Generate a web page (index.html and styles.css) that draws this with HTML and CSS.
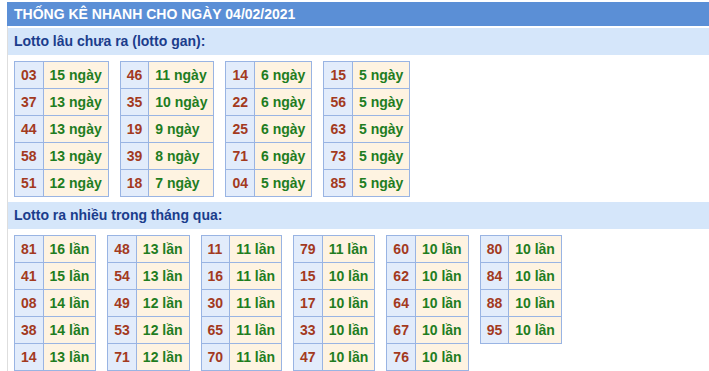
FILE: index.html
```html
<!DOCTYPE html>
<html lang="vi">
<head>
<meta charset="utf-8">
<title>Thống kê nhanh</title>
<link rel="stylesheet" href="styles.css">
</head>
<body>
<div class="box">
  <div class="head">THỐNG KÊ NHANH CHO NGÀY 04/02/2021</div>
  <div class="content">
    <div class="band">Lotto lâu chưa ra (lotto gan):</div>
    <div class="tables">
      <table class="lt">
        <tr><td class="n">03</td><td class="v">15 ngày</td></tr>
        <tr><td class="n">37</td><td class="v">13 ngày</td></tr>
        <tr><td class="n">44</td><td class="v">13 ngày</td></tr>
        <tr><td class="n">58</td><td class="v">13 ngày</td></tr>
        <tr><td class="n">51</td><td class="v">12 ngày</td></tr>
      </table>
      <table class="lt">
        <tr><td class="n">46</td><td class="v">11 ngày</td></tr>
        <tr><td class="n">35</td><td class="v">10 ngày</td></tr>
        <tr><td class="n">19</td><td class="v">9 ngày</td></tr>
        <tr><td class="n">39</td><td class="v">8 ngày</td></tr>
        <tr><td class="n">18</td><td class="v">7 ngày</td></tr>
      </table>
      <table class="lt">
        <tr><td class="n">14</td><td class="v">6 ngày</td></tr>
        <tr><td class="n">22</td><td class="v">6 ngày</td></tr>
        <tr><td class="n">25</td><td class="v">6 ngày</td></tr>
        <tr><td class="n">71</td><td class="v">6 ngày</td></tr>
        <tr><td class="n">04</td><td class="v">5 ngày</td></tr>
      </table>
      <table class="lt">
        <tr><td class="n">15</td><td class="v">5 ngày</td></tr>
        <tr><td class="n">56</td><td class="v">5 ngày</td></tr>
        <tr><td class="n">63</td><td class="v">5 ngày</td></tr>
        <tr><td class="n">73</td><td class="v">5 ngày</td></tr>
        <tr><td class="n">85</td><td class="v">5 ngày</td></tr>
      </table>
    </div>
    <div class="band band2">Lotto ra nhiều trong tháng qua:</div>
    <div class="tables">
      <table class="lt">
        <tr><td class="n">81</td><td class="v">16 lần</td></tr>
        <tr><td class="n">41</td><td class="v">15 lần</td></tr>
        <tr><td class="n">08</td><td class="v">14 lần</td></tr>
        <tr><td class="n">38</td><td class="v">14 lần</td></tr>
        <tr><td class="n">14</td><td class="v">13 lần</td></tr>
      </table>
      <table class="lt">
        <tr><td class="n">48</td><td class="v">13 lần</td></tr>
        <tr><td class="n">54</td><td class="v">13 lần</td></tr>
        <tr><td class="n">49</td><td class="v">12 lần</td></tr>
        <tr><td class="n">53</td><td class="v">12 lần</td></tr>
        <tr><td class="n">71</td><td class="v">12 lần</td></tr>
      </table>
      <table class="lt">
        <tr><td class="n">11</td><td class="v">11 lần</td></tr>
        <tr><td class="n">16</td><td class="v">11 lần</td></tr>
        <tr><td class="n">30</td><td class="v">11 lần</td></tr>
        <tr><td class="n">65</td><td class="v">11 lần</td></tr>
        <tr><td class="n">70</td><td class="v">11 lần</td></tr>
      </table>
      <table class="lt">
        <tr><td class="n">79</td><td class="v">11 lần</td></tr>
        <tr><td class="n">15</td><td class="v">10 lần</td></tr>
        <tr><td class="n">17</td><td class="v">10 lần</td></tr>
        <tr><td class="n">33</td><td class="v">10 lần</td></tr>
        <tr><td class="n">47</td><td class="v">10 lần</td></tr>
      </table>
      <table class="lt">
        <tr><td class="n">60</td><td class="v">10 lần</td></tr>
        <tr><td class="n">62</td><td class="v">10 lần</td></tr>
        <tr><td class="n">64</td><td class="v">10 lần</td></tr>
        <tr><td class="n">67</td><td class="v">10 lần</td></tr>
        <tr><td class="n">76</td><td class="v">10 lần</td></tr>
      </table>
      <table class="lt">
        <tr><td class="n">80</td><td class="v">10 lần</td></tr>
        <tr><td class="n">84</td><td class="v">10 lần</td></tr>
        <tr><td class="n">88</td><td class="v">10 lần</td></tr>
        <tr><td class="n">95</td><td class="v">10 lần</td></tr>
      </table>
    </div>
  </div>
</div>
</body>
</html>
```

FILE: styles.css
```css
html, body {
  margin: 0;
  padding: 0;
  background: #ffffff;
}

body {
  font-family: "Liberation Sans", Arial, sans-serif;
  font-size: 14px;
  font-weight: bold;
}

.box {
  margin-left: 7px;
  padding-top: 2px;
}

.head {
  height: 24px;
  line-height: 24px;
  padding-left: 7px;
  background: #5b8fd6;
  color: #ffffff;
  font-size: 14px;
  white-space: nowrap;
}

.content {
  border-left: 1px solid #dedede;
  padding-top: 2px;
}

.band {
  height: 27px;
  line-height: 27px;
  padding-left: 6px;
  background: #d5e6fa;
  color: #1b3d8c;
  font-size: 14px;
}

.band2 {
  margin-top: 5px;
}

.tables {
  display: flex;
  align-items: flex-start;
  gap: 11px;
  padding: 6px 0 0 6px;
}

.lt {
  border-collapse: collapse;
}

.lt td {
  border: 1px solid #99b4e3;
  height: 26px;
  padding: 0 6px;
  line-height: 26px;
  white-space: nowrap;
  box-sizing: border-box;
}

.lt td.n {
  background: #e2ecfb;
  color: #a33a1e;
}

.lt td.v {
  background: #fef3e1;
  color: #1f7d1f;
}
```
